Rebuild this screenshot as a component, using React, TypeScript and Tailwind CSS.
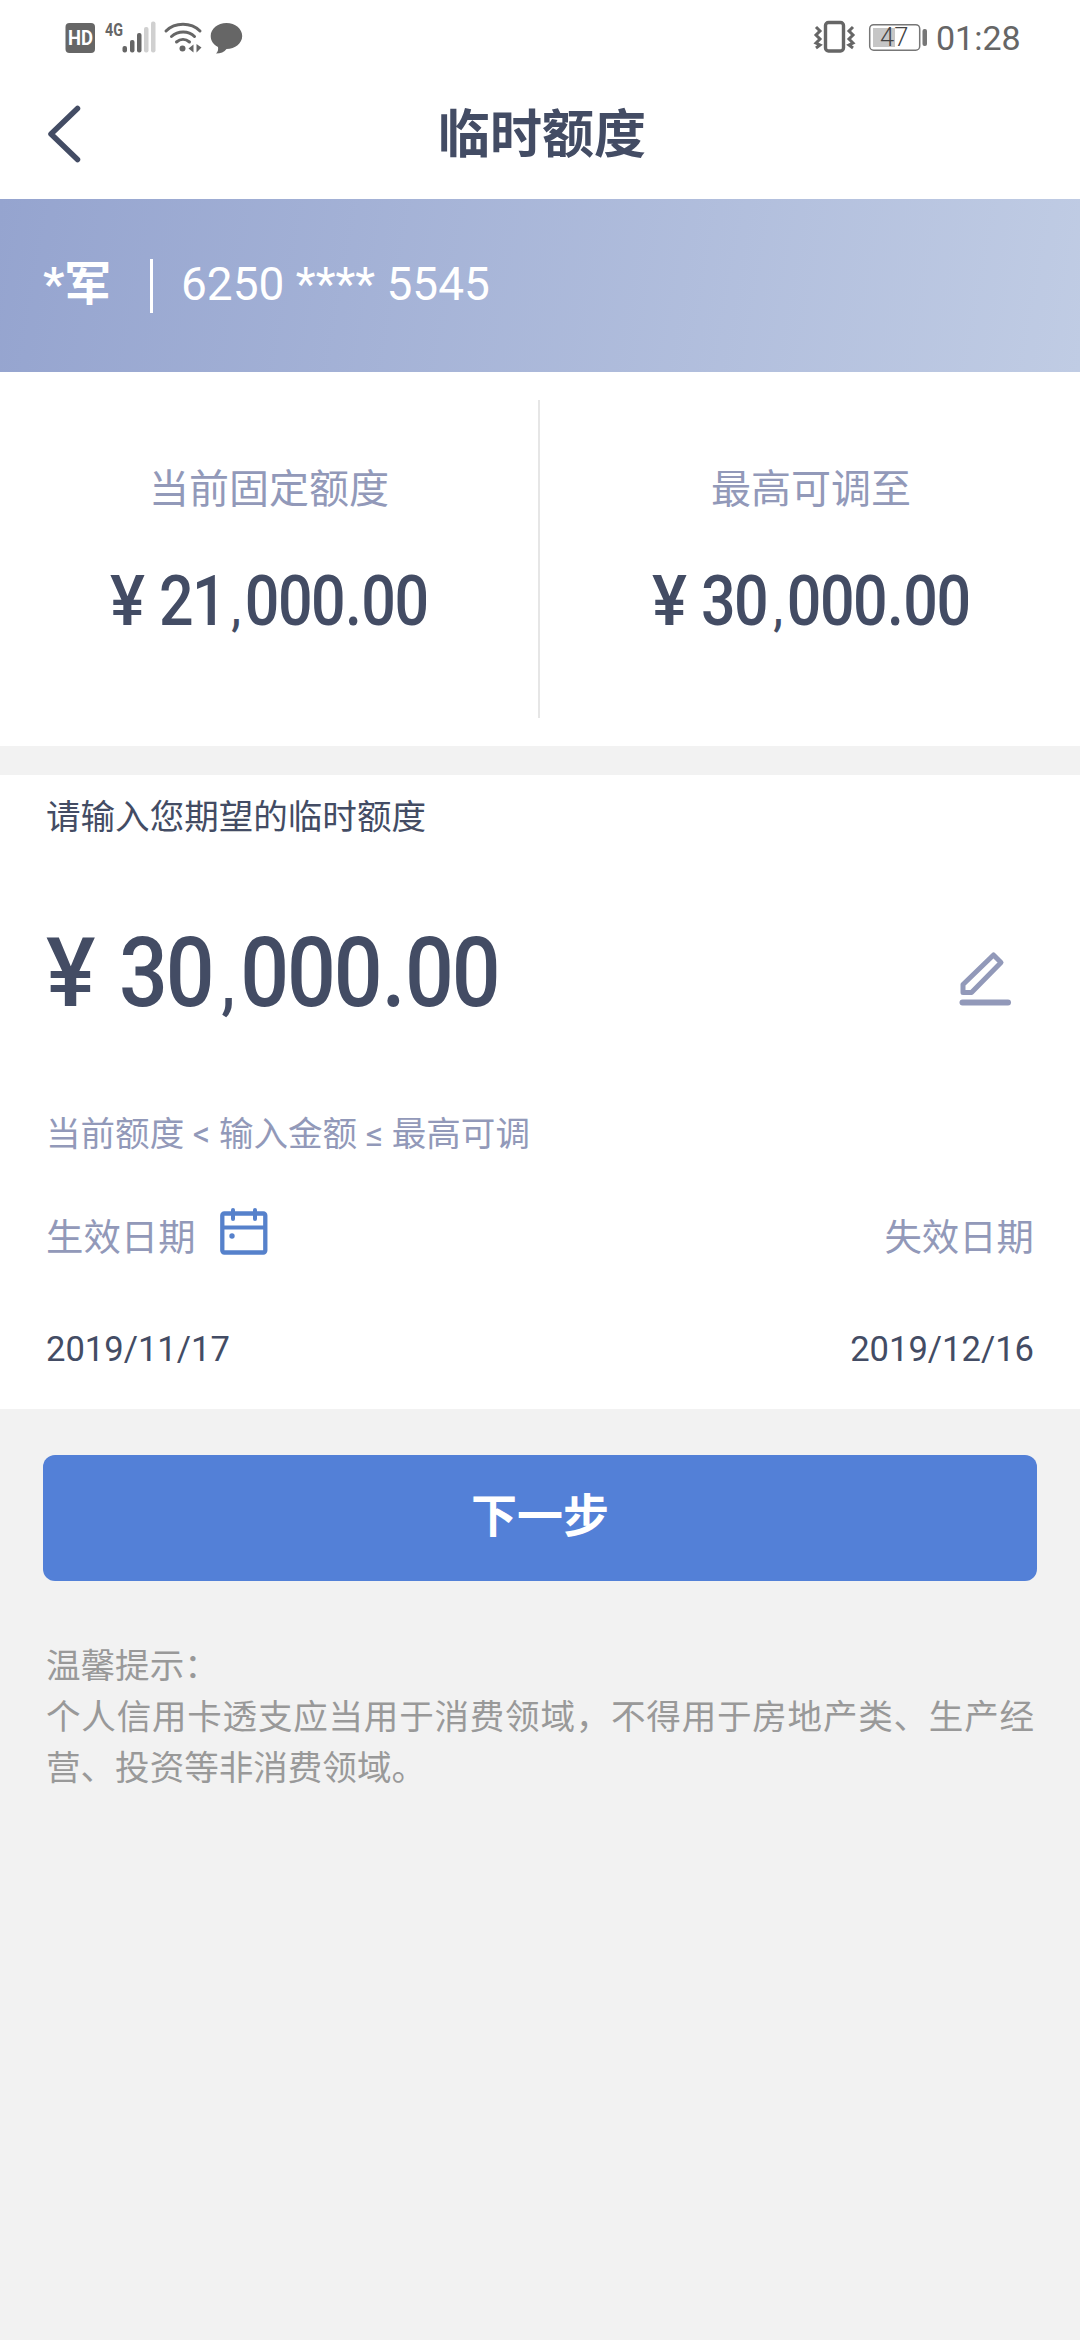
const StatusBar = () => {
  return (
    <div className="flex h-[76px] items-center justify-between pl-[64px] pr-[60px] text-[#666]">
      <svg width="180" height="60" viewBox="64 8 180 60" fill="none">
        <rect x="65.500" y="23" width="29.500" height="30" rx="4" fill="#666" />
        <text x="68" y="45" fontSize="19.500" fontWeight="700" fill="#fff" textLength="25" lengthAdjust="spacingAndGlyphs" fontFamily="Roboto, sans-serif">HD</text>
        <text x="105" y="35.500" fontSize="19" fontWeight="700" fill="#666" textLength="18" lengthAdjust="spacingAndGlyphs" fontFamily="Roboto, sans-serif">4G</text>
        <g fill="#666">
          <rect x="122.500" y="46" width="4.500" height="6.500" rx="2" />
          <rect x="130" y="40" width="4.500" height="12.500" rx="2" />
          <rect x="137" y="33" width="4.500" height="19.500" rx="2" />
        </g>
        <g fill="#d0d0d0">
          <rect x="144" y="27" width="4.500" height="25.500" rx="2" />
          <rect x="151" y="21.500" width="4.500" height="31" rx="2" />
        </g>
        <g stroke="#666" strokeWidth="3" strokeLinecap="round">
          <path d="M166 31c9-9 25-9 34 0" />
          <path d="M171.500 36.500c6.500-6 17-6 23 0" />
          <path d="M176.500 42c4-3.500 9-3.500 13 0" />
        </g>
        <circle cx="182.500" cy="48.500" r="3" fill="#666" />
        <path d="M188.500 48.500l5-4v8zM201.500 47.500l-5-3.500v8.500z" fill="#666" />
        <path d="M226.500 23c8.800 0 15.700 5.700 15.700 13s-7 13-15.700 13c-2 3-6 4.500-10.500 4.500c1.800-1.500 2.500-3.500 2-6.500c-4.500-2.300-7.300-6-7.300-11c0-7.300 7-13 15.800-13z" fill="#666" />
      </svg>
      <div className="flex items-center">
        <svg width="116" height="60" viewBox="812 8 116 60" fill="none">
          <rect x="824.500" y="22.500" width="18" height="28.500" rx="3" stroke="#666" strokeWidth="3.400" />
          <path d="M815 27l4 4l-4 4l4 4l-4 4l4 2l-4 3M852 27l-4 4l4 4l-4 4l4 4l-4 2l4 3" stroke="#666" strokeWidth="3" />
          <rect x="868.700" y="24.700" width="50" height="25.500" rx="4" stroke="#777" strokeWidth="1.500" />
          <rect x="872" y="28" width="22" height="19" fill="#c6c6c6" />
          <rect x="921.500" y="29" width="4.500" height="17" rx="2" fill="#777" />
          <text x="879" y="46" fontSize="25.500" fontWeight="300" fill="#444" fontFamily="Roboto, sans-serif">47</text>
        </svg>
        <span className="ml-[7px] w-[84px] whitespace-nowrap text-[34px] leading-none">01:28</span>
      </div>
    </div>
  );
};

const Header = () => {
  return (
    <div className="grid h-[123px] grid-cols-[1fr_auto_1fr] items-center pb-[8px] text-[#434c64]">
      <svg className="ml-[47px]" width="34" height="58" viewBox="0 0 34 58" fill="none">
        <path d="M30.500 3.500L4 29l26.500 25.500" stroke="currentColor" strokeWidth="5.500" strokeLinecap="round" strokeLinejoin="round" />
      </svg>
      <h1 className="pl-[4px] pt-[4px] text-[52px] font-bold leading-none">临时额度</h1>
    </div>
  );
};

// condensed digits, separators get a little extra room
const Amount = ({ value }: { value: string }) => {
  return (
    <>
      {value.split(/([,.])/).map((part, i) =>
        /[,.]/.test(part) ? (
          <span key={i} className={part === "," ? "pl-[0.140em] pr-[0.120em] text-[0.720em]" : "px-[0.015em]"}>
            {part}
          </span>
        ) : (
          part
        ),
      )}
    </>
  );
};

const LimitItem = ({ label, value }: { label: string; value: string }) => {
  return (
    <div className="flex flex-1 flex-col items-center">
      <div className="mt-[70px] text-[40px] leading-[40px] text-[#9299b9]">{label}</div>
      <div className="mt-[56px] flex w-[318px] whitespace-nowrap text-[70px] font-medium leading-[70px] text-[#434c64]">
        <span className="w-[49px] shrink-0 origin-left scale-x-[0.940]">¥</span>
        <span className="origin-left scale-x-[0.870] tracking-[-0.025em]">
          <Amount value={value} />
        </span>
      </div>
    </div>
  );
};

const EditIcon = () => {
  return (
    <svg className="mt-[7px]" width="53" height="56" viewBox="0 0 53 56" fill="none" stroke="#9299b9">
      <path d="M4 41.500V33.500L34.500 4L42 11.500L12.500 41.500z" strokeWidth="5" strokeLinejoin="round" />
      <path d="M3.500 51.500h45.500" strokeWidth="6" strokeLinecap="round" />
    </svg>
  );
};

const CalendarIcon = () => {
  return (
    <svg width="48" height="48" viewBox="0 0 48 48" fill="none" stroke="#5681cb">
      <rect x="2.300" y="6.500" width="43" height="39" rx="2" strokeWidth="4.300" />
      <path d="M2 20.500h44" strokeWidth="4" />
      <path d="M13 3v9M35 3v9" strokeWidth="4" strokeLinecap="round" />
      <circle cx="12" cy="29" r="2.700" fill="#5681cb" stroke="none" />
    </svg>
  );
};

export default function App() {
  return (
    <div className="h-[2340px] w-[1080px] overflow-hidden bg-[#f2f2f2] font-['Roboto','Noto_Sans_CJK_SC',sans-serif]">
      <div className="bg-white">
        <StatusBar />
        <Header />
      </div>

      <div className="flex h-[173px] items-center bg-[linear-gradient(100deg,#95a4cf,#c0cce4)] pl-[43px] text-white">
        <span className="w-[107px] pb-[5px] text-[47px] font-bold leading-none">*军</span>
        <span className="h-[54px] w-[3px] bg-white" />
        <span className="ml-[28px] pb-[4px] text-[46px] leading-none">6250 **** 5545</span>
      </div>

      <div className="flex h-[374px] bg-white py-[28px]">
        <LimitItem label="当前固定额度" value="21,000.00" />
        <div className="mr-[2px] w-[2px] bg-[#e6e6e6]" />
        <LimitItem label="最高可调至" value="30,000.00" />
      </div>

      <div className="mt-[29px] h-[634px] bg-white px-[46px]">
        <div className="pt-[24px] text-[34.560px] leading-[36px] text-[#434c64]">请输入您期望的临时额度</div>
        <div className="mt-[88px] flex h-[104px] items-center justify-between pr-[22px]">
          <div className="flex whitespace-nowrap pt-[4px] text-[97px] font-medium leading-[104px] text-[#434c64]">
            <span className="w-[73px] origin-left scale-x-[0.960]">¥</span>
            <span className="origin-left scale-x-[0.887] tracking-[-0.025em]">
              <Amount value="30,000.00" />
            </span>
          </div>
          <EditIcon />
        </div>
        <div className="mt-[89px] text-[34.560px] leading-[36px] text-[#9299b9]">当前额度 &lt; 输入金额 ≤ 最高可调</div>
        <div className="mt-[55px] flex items-start justify-between text-[37.400px] leading-[62px] text-[#9299b9]">
          <div className="flex items-start gap-[24px]">
            <span>生效日期</span>
            <CalendarIcon />
          </div>
          <span>失效日期</span>
        </div>
        <div className="mt-[60px] flex justify-between text-[34.560px] leading-[40px] text-[#434c64]">
          <span>2019/11/17</span>
          <span>2019/12/16</span>
        </div>
      </div>

      <button className="mx-[43px] mt-[46px] flex h-[126px] w-[994px] items-center justify-center rounded-[12px] bg-[#5380d7] pb-[4px] text-[46px] font-bold leading-none text-white">
        下一步
      </button>

      <div className="mt-[60px] px-[46px] text-[34.560px] leading-[51px] text-[#999]">
        <p>温馨提示：</p>
        <p className="text-justify">个人信用卡透支应当用于消费领域，不得用于房地产类、生产经营、投资等非消费领域。</p>
      </div>
    </div>
  );
}
